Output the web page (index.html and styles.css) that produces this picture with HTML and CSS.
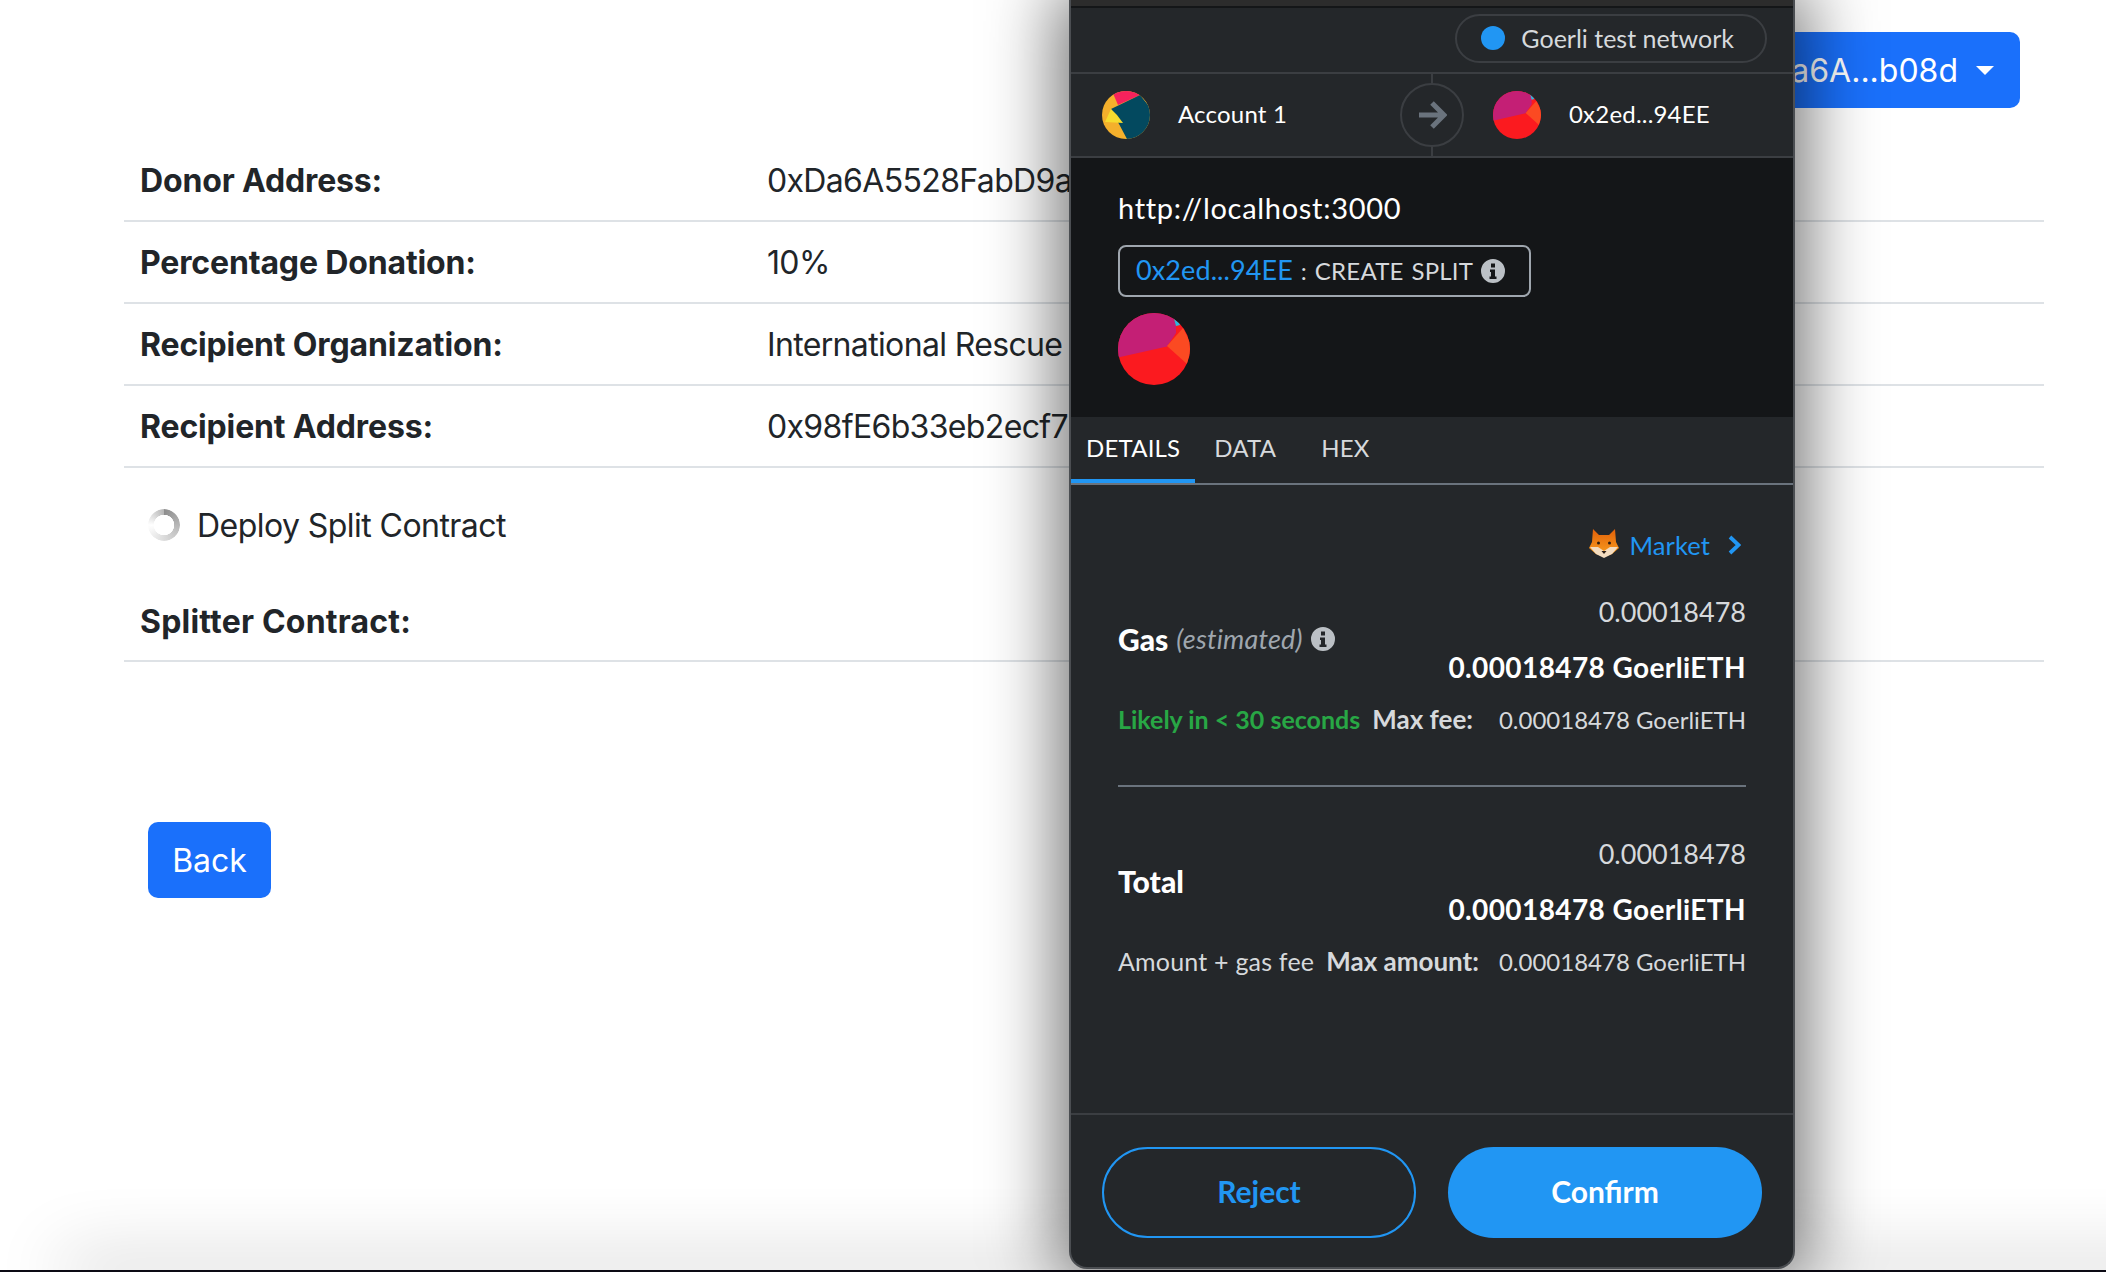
FILE: index.html
```html
<!DOCTYPE html>
<html lang="en">

<head>
    <meta charset="UTF-8">
    <title>Create Split</title>
    <link rel="stylesheet" href="styles.css">
</head>

<body>
    <svg class="defs" width="0" height="0">
        <defs>
            <clipPath id="round"><circle cx="36" cy="36" r="36" /></clipPath>
            <clipPath id="round-small"><circle cx="24" cy="24" r="24" /></clipPath>
            <linearGradient id="fox-fur" x1="0" y1="0" x2="0" y2="1">
                <stop offset="0" stop-color="#e2600a" />
                <stop offset="1" stop-color="#f9a11e" />
            </linearGradient>
            <symbol id="avatar-a" viewBox="0 0 48 48">
                <g clip-path="url(#round-small)">
                    <rect width="48" height="48" fill="#f4b02c" />
                    <polygon points="10,0 16,14 38,4 30,-2" fill="#f6225c" />
                    <polygon points="9,18 38,4 50,19 50,49 25,48" fill="#03495f" />
                    <polygon points="9,18 3,31 21,32 15,24" fill="#f6dc2e" />
                </g>
            </symbol>
            <symbol id="avatar-b" viewBox="0 0 72 72">
                <g clip-path="url(#round)">
                    <rect width="72" height="72" fill="#fb1a1f" />
                    <polygon points="0,0 56,0 56,6 58,13 58,20 49,33.5 0,44.5" fill="#c41f75" />
                    <polygon points="49,33 65,15 74,33 69,51" fill="#fb4a22" />
                    <polygon points="56,0 56,6 58,13 62,12" fill="#2bb8e0" />
                </g>
            </symbol>
            <symbol id="info" viewBox="0 0 24 24">
                <path fill-rule="evenodd" d="M12 0a12 12 0 1 0 0 24a12 12 0 0 0 0-24zM10 4.500h4v4h-4zM9 10.500h5v7h1.500v2.500h-7v-2.500h1.500v-4.500h-1z" />
            </symbol>
        </defs>
    </svg>

    <div class="page">
        <div class="topbar">
            <button class="btn btn-account">0xDa6A...b08d <span class="caret"></span></button>
        </div>

        <div class="row"><b>Donor Address:</b><span>0xDa6A5528FabD9a</span></div>
        <div class="row"><b>Percentage Donation:</b><span>10%</span></div>
        <div class="row"><b>Recipient Organization:</b><span>International Rescue</span></div>
        <div class="row"><b>Recipient Address:</b><span>0x98fE6b33eb2ecf7</span></div>

        <div class="deploy">
            <span class="spinner"></span>
            Deploy Split Contract
        </div>

        <div class="row row-splitter"><b>Splitter Contract:</b></div>

        <button class="btn btn-back">Back</button>
    </div>

    <div class="page-edge"></div>

    <div class="wallet">
        <div class="wallet-top"></div>

        <div class="network-bar">
            <div class="network-pill">
                <span class="dot"></span>
                Goerli test network
            </div>
        </div>

        <div class="accounts">
            <div class="account account-from">
                <svg class="avatar"><use href="#avatar-a" /></svg>
                Account 1
            </div>
            <div class="arrow">
                <svg width="30" height="32" viewBox="0 0 30 32">
                    <path d="M2 16h24M15 4l12 12l-12 12" fill="none" stroke="#6a737d" stroke-width="5" />
                </svg>
            </div>
            <div class="account">
                <svg class="avatar"><use href="#avatar-b" /></svg>
                0x2ed...94EE
            </div>
        </div>

        <div class="summary">
            <div class="origin">http://localhost:3000</div>
            <div class="method">
                <span class="method-name"><span class="link">0x2ed...94EE</span> : CREATE SPLIT</span>
                <svg class="info info-light"><use href="#info" /></svg>
            </div>
            <svg class="avatar-big"><use href="#avatar-b" /></svg>
        </div>

        <div class="tabs">
            <span class="tab tab-active">DETAILS</span>
            <span class="tab tab-data">DATA</span>
            <span class="tab">HEX</span>
        </div>

        <div class="details">
            <div class="market">
                <svg class="fox" viewBox="0 0 30 30">
                    <path d="M4 1l6 6h10l6-6l1 13l3 6l-7 6l-8 3l-8-3l-7-6l3-6z" fill="url(#fox-fur)" />
                    <path d="M1 19l8 0l6 4l6-4l8 0l-6 7l-8 4l-8-4z" fill="#f3dcc0" />
                    <circle cx="9.500" cy="15" r="1.500" fill="#2a1c12" />
                    <circle cx="20.500" cy="15" r="1.500" fill="#2a1c12" />
                    <path d="M12.500 23h5l-2.500 3z" fill="#2a1c12" />
                </svg>
                <span class="link link-market">Market</span>
                <svg class="chevron" width="13" height="20" viewBox="0 0 13 20">
                    <path d="M2 2l8.500 8l-8.500 8" fill="none" stroke="#2196f3" stroke-width="3.800" />
                </svg>
            </div>

            <div class="fee fee-gas">
                <div class="fee-label"><b>Gas</b> <i>(estimated)</i> <svg class="info info-grey"><use href="#info" /></svg></div>
                <div class="fee-amounts">
                    <div class="amount">0.00018478</div>
                    <div class="amount-bold">0.00018478 GoerliETH</div>
                </div>
            </div>
            <div class="fee-sub">
                <span class="likely">Likely in &lt; 30 seconds</span>
                <b>Max fee:</b>
                <span class="fee-max">0.00018478 GoerliETH</span>
            </div>

            <div class="divider"></div>

            <div class="fee fee-total">
                <div class="fee-label"><b>Total</b></div>
                <div class="fee-amounts">
                    <div class="amount">0.00018478</div>
                    <div class="amount-bold">0.00018478 GoerliETH</div>
                </div>
            </div>
            <div class="fee-sub">
                <span class="gas-note">Amount + gas fee</span>
                <b>Max amount:</b>
                <span class="fee-max">0.00018478 GoerliETH</span>
            </div>
        </div>

        <div class="footer">
            <button class="pill pill-reject">Reject</button>
            <button class="pill pill-confirm">Confirm</button>
        </div>
    </div>
</body>

</html>
```

FILE: styles.css
```css
html,
body {
    margin: 0;
    height: 1272px;
    overflow: hidden;
}

body {
    background-color: #fff;
    color: #212529;
    font-family: Inter, "Liberation Sans", sans-serif;
    font-size: 32px;
    position: relative;
}

.defs {
    position: absolute;
}

/* Page behind the wallet */
.page {
    padding: 32px 62px 0 124px;
}

.topbar {
    display: flex;
    justify-content: flex-end;
    height: 76px;
    margin-bottom: 32px;
    padding-right: 24px;
}

.btn {
    background-color: #1a70fb;
    color: #fff;
    border: none;
    border-radius: 10px;
    font: inherit;
    white-space: nowrap;
}

.btn-account {
    display: flex;
    align-items: center;
    gap: 18px;
    padding: 0 26px 0 24px;
}

.caret {
    width: 0;
    height: 0;
    border-left: 9px solid transparent;
    border-right: 9px solid transparent;
    border-top: 9px solid #fff;
}

.row {
    display: grid;
    grid-template-columns: 627px 1fr;
    align-items: center;
    height: 80px;
    padding-left: 16px;
    border-bottom: 2px solid #dee2e6;
    white-space: nowrap;
}

.row b {
    letter-spacing: -0.15px;
}

.row span {
    letter-spacing: -0.65px;
}

.deploy {
    display: flex;
    align-items: center;
    gap: 17px;
    height: 114px;
    padding: 0 0 2px 24px;
    letter-spacing: -0.55px;
}

.spinner {
    width: 32px;
    height: 32px;
    border-radius: 50%;
    background: conic-gradient(#8c8c8c 0deg, #c4c4c4 120deg, #ffffff 270deg, #b5b5b5 360deg);
    -webkit-mask: radial-gradient(circle, transparent 10px, #000 10.500px);
    mask: radial-gradient(circle, transparent 10px, #000 10.500px);
}

.row-splitter {
    height: 74px;
    padding-bottom: 2px;
}

.row-splitter b {
    letter-spacing: 0.2px;
}

.btn-back {
    display: block;
    width: 123px;
    height: 76px;
    margin: 160px 0 0 24px;
}

.page-edge {
    position: absolute;
    left: 0;
    right: 0;
    bottom: 0;
    height: 2px;
    background-color: #0c0a14;
}

.page-edge::before {
    content: "";
    position: absolute;
    left: 70px;
    right: -100px;
    bottom: 0;
    height: 2px;
    z-index: -1;
    box-shadow: 0 0 70px 8px rgba(0, 0, 0, 0.32);
}

/* Wallet popup */
.wallet {
    position: absolute;
    z-index: 1;
    left: 1069px;
    top: 0;
    width: 726px;
    height: 1269px;
    box-sizing: border-box;
    display: flex;
    flex-direction: column;
    background-color: #24272a;
    color: #fff;
    border: solid #4b4e52;
    border-width: 0 2px 2px;
    border-radius: 0 0 18px 18px;
    box-shadow: 0 0 70px 12px rgba(0, 0, 0, 0.55);
    font-family: Lato, "Liberation Sans", sans-serif;
    font-size: 24px;
    letter-spacing: 0.2px;
}

.wallet-top {
    height: 6px;
    background-color: #2c2c2c;
    border-bottom: 2px solid #141618;
}

.network-bar {
    display: flex;
    justify-content: flex-end;
    height: 64px;
    padding-right: 26px;
    border-bottom: 2px solid #3b3e42;
}

.network-pill {
    display: flex;
    align-items: center;
    gap: 16px;
    height: 49px;
    margin-top: 6px;
    padding: 0 31px 2px 24px;
    box-sizing: border-box;
    border: 2px solid #3b3e42;
    border-radius: 25px;
    color: #d6d9dc;
    font-size: 25px;
    letter-spacing: 0;
}

.dot {
    width: 24px;
    height: 24px;
    border-radius: 50%;
    background-color: #2196f3;
}

.accounts {
    display: flex;
    height: 82px;
    border-bottom: 2px solid #3b3e42;
}

.account {
    display: flex;
    align-items: center;
    gap: 28px;
    flex: 1;
    box-sizing: border-box;
    padding: 0 0 4px 29px;
}

.account-from {
    flex: none;
    width: 329px;
    padding-left: 31px;
}

.avatar {
    width: 48px;
    height: 48px;
    margin-top: 3px;
}

.arrow {
    width: 64px;
    height: 64px;
    margin: 9px 0;
    box-sizing: border-box;
    flex: none;
    display: flex;
    align-items: center;
    justify-content: center;
    border: 2px solid #3b3e42;
    border-radius: 50%;
    background-color: #24272a;
    position: relative;
}

.arrow::before {
    content: "";
    position: absolute;
    left: 29px;
    top: -11px;
    width: 2px;
    height: 82px;
    background-color: #3b3e42;
    z-index: -1;
}

.summary {
    height: 259px;
    box-sizing: border-box;
    padding: 31px 0 0 47px;
    background-color: #141618;
}

.origin {
    font-size: 29px;
    line-height: 38px;
    letter-spacing: 0.7px;
}

.method {
    display: inline-flex;
    align-items: center;
    gap: 8px;
    height: 52px;
    box-sizing: border-box;
    margin-top: 18px;
    padding: 0 24px 0 16px;
    border: 2px solid #9fa6ae;
    border-radius: 8px;
    color: #d6d9dc;
}

.method-name {
    word-spacing: 1.500px;
    margin-top: -3px;
}

.link {
    color: #2196f3;
    font-size: 27px;
    letter-spacing: 0.1px;
}

.link-market {
    font-size: 25.500px;
}

.info {
    width: 24px;
    height: 24px;
    flex: none;
}

.info-light {
    fill: #bbc0c5;
}

.info-grey {
    fill: #bbc0c5;
}

.avatar-big {
    display: block;
    width: 72px;
    height: 72px;
    margin-top: 16px;
}

.tabs {
    display: flex;
    height: 68px;
    box-sizing: border-box;
    border-bottom: 2px solid #6a737d;
    color: #d6d9dc;
}

.tab {
    padding: 16px 0 0;
    margin-right: 36px;
}

.tab-data {
    margin-right: 45px;
}

.tab-active {
    color: #fff;
    padding: 16px 15px 0;
    margin-right: 19px;
    border-bottom: 4px solid #2196f3;
}

.details {
    flex: 1;
    padding: 45px 47px 0;
    box-sizing: border-box;
}

.market {
    display: flex;
    align-items: center;
    justify-content: flex-end;
    gap: 10px;
    height: 30px;
    padding-right: 5px;
}

.market .chevron {
    margin-left: 8px;
}

.fox {
    width: 30px;
    height: 30px;
    margin-top: -4px;
}

.fee {
    display: flex;
    justify-content: space-between;
    align-items: center;
}

.fee-gas {
    margin-top: 32px;
}

.fee-total {
    margin-top: 47px;
}

.fee-label {
    display: flex;
    align-items: center;
    gap: 8px;
    padding-bottom: 2px;
    font-size: 30px;
}

.fee-label b {
    font-weight: 900;
    letter-spacing: 0;
}

.fee-label i {
    color: #9fa6ae;
    font-size: 27px;
}

.fee-amounts {
    text-align: right;
}

.amount {
    color: #d6d9dc;
    font-size: 27px;
    line-height: 40px;
    letter-spacing: 0;
}

.amount-bold {
    margin-top: 15px;
    font-weight: 700;
    font-size: 28px;
    line-height: 40px;
    letter-spacing: 0.4px;
}

.fee-sub {
    display: flex;
    align-items: center;
    margin-top: 16px;
    color: #d6d9dc;
    white-space: nowrap;
}

.fee-sub b {
    margin-left: 12px;
    font-size: 26px;
    letter-spacing: 0;
}

.likely {
    color: #28a745;
    font-weight: 700;
    font-size: 25px;
    letter-spacing: 0;
}

.gas-note {
    font-size: 25px;
}

.fee-max {
    margin-left: auto;
    letter-spacing: 0;
}

.divider {
    height: 2px;
    margin-top: 50px;
    background-color: #6a737d;
}

.footer {
    display: flex;
    justify-content: space-between;
    height: 154px;
    box-sizing: border-box;
    padding: 32px 31px 0;
    border-top: 2px solid #3b3e42;
}

.pill {
    width: 314px;
    height: 91px;
    padding-bottom: 5px;
    border-radius: 46px;
    font: inherit;
    font-size: 30px;
    font-weight: 700;
}

.pill-reject {
    background-color: transparent;
    color: #2196f3;
    border: 2px solid #2196f3;
}

.pill-confirm {
    background-color: #2196f3;
    color: #fff;
    border: none;
}
```
